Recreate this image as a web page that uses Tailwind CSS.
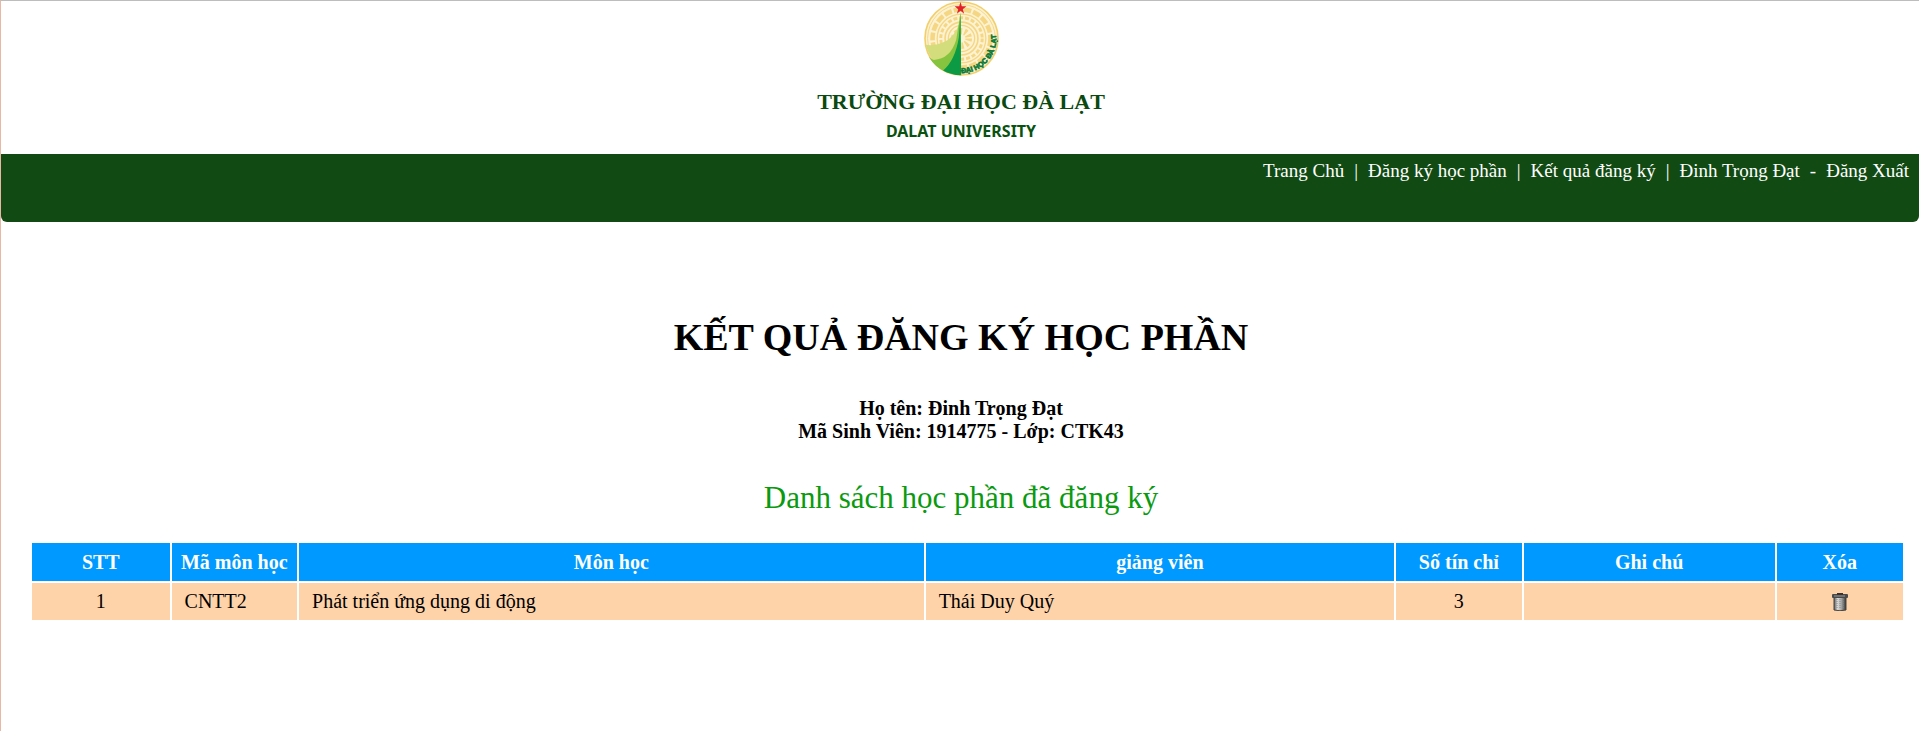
<!DOCTYPE html>
<html lang="vi">
<head>
<meta charset="utf-8">
<title>Kết quả đăng ký học phần</title>
<script src="https://cdn.jsdelivr.net/npm/@tailwindcss/browser@4"></script>
</head>
<body class="min-h-screen border-t border-l border-t-[#bdbdbd] border-l-[#e9b8a4] bg-white font-['Liberation_Serif',serif] text-black">
  <header>
    <div class="flex flex-col items-center pb-[11px] pl-0.5 text-[#0a4a10]">
      <svg class="h-[75px] w-[75px]" viewBox="70 0 228 228" role="img" aria-label="Đại học Đà Lạt">
        <circle cx="184" cy="114" r="111" fill="#fdf3d3" stroke="#f3cf6b" stroke-width="5"/>
        <g fill="none" stroke="#f5d683">
          <circle cx="184" cy="114" r="103" stroke-width="3"/>
          <circle cx="184" cy="114" r="88" stroke-width="14" stroke-dasharray="24 6"/>
          <circle cx="184" cy="114" r="74" stroke-width="4"/>
          <circle cx="184" cy="114" r="63" stroke-width="9" stroke-dasharray="12 6"/>
          <circle cx="184" cy="114" r="50" stroke-width="5"/>
          <circle cx="184" cy="114" r="40" stroke-width="4"/>
          <circle cx="184" cy="114" r="22" stroke-width="20" stroke-dasharray="7 7"/>
        </g>
        <path d="M75 133Q100 137 126 127Q160 115 177 70L181 36V226Q100 218 75 133Z" fill="#d3dd7c"/>
        <path d="M80 160Q86 175 100 179Q150 177 168 118L181 36V226Q106 218 80 160Z" fill="#86c440"/>
        <path d="M128 211Q165 180 176 110L181 36L183 226Q150 224 128 211Z" fill="#0c9a45"/>
        <path d="M181 3L185 16L199 16L188 25L192 39L181 30L170 39L174 25L163 16L177 16Z" fill="#e32227"/>
        <path id="seal" d="M183 219A105 105 0 0 0 288 95" fill="none"/>
        <text class="font-['Liberation_Sans',sans-serif] text-[22px] font-bold" fill="#0b7a38" stroke="#0b7a38" stroke-width="2"><textPath href="#seal">ĐẠI HỌC ĐÀ LẠT</textPath></text>
      </svg>
      <p class="mt-2.5 text-[22px] leading-8 font-bold">TRƯỜNG ĐẠI HỌC ĐÀ LẠT</p>
      <p class="mt-px font-['Noto_Sans',sans-serif] text-base leading-6 font-bold text-[#0a520f]">DALAT UNIVERSITY</p>
    </div>
    <nav class="flex h-[68px] items-start justify-end gap-2.5 rounded-b-[6px] bg-[#114a13] px-2.5 pt-[5px] text-[19px] leading-6 text-white">
      <a href="#">Trang Chủ</a><span>|</span>
      <a href="#">Đăng ký học phần</a><span>|</span>
      <a href="#">Kết quả đăng ký</a><span>|</span>
      <a href="#">Đinh Trọng Đạt</a><span>-</span>
      <a href="#">Đăng Xuất</a>
    </nav>
  </header>
  <main class="pt-[92px] pb-10">
    <div class="pl-0.5 text-center">
      <h1 class="text-[38px] leading-[46px] font-bold">KẾT QUẢ ĐĂNG KÝ HỌC PHẦN</h1>
      <p class="mt-[37px] text-xl leading-[23px] font-bold">Họ tên: Đinh Trọng Đạt<br>Mã Sinh Viên: 1914775 - Lớp: CTK43</p>
      <h2 id="list-title" class="pt-[37px] pb-[25px] text-[31px] leading-9 text-[#0a9a0f]">Danh sách học phần đã đăng ký</h2>
    </div>
    <div class="pr-3.5 pl-[29px]">
    <table aria-labelledby="list-title" class="w-full table-fixed border-separate border-spacing-[2px] text-xl leading-[23px]">
      <colgroup>
        <col class="w-[7.4%]"><col class="w-[6.75%]"><col class="w-[33.6%]"><col class="w-[25.2%]"><col class="w-[6.75%]"><col class="w-[13.5%]"><col class="w-[6.8%]">
      </colgroup>
      <thead>
        <tr class="h-[38px] bg-[#0099ff] text-white">
          <th>STT</th><th>Mã môn học</th><th>Môn học</th><th>giảng viên</th><th>Số tín chỉ</th><th>Ghi chú</th><th>Xóa</th>
        </tr>
      </thead>
      <tbody>
        <tr class="h-[37px] bg-[#ffd3a9]">
          <td class="text-center">1</td>
          <td class="px-[13px]">CNTT2</td>
          <td class="px-[13px]">Phát triển ứng dụng di động</td>
          <td class="px-[13px]">Thái Duy Quý</td>
          <td class="text-center">3</td>
          <td></td>
          <td class="text-center">
            <button type="button" aria-label="Xóa" class="mx-auto block cursor-pointer">
              <svg class="h-[18px] w-4" viewBox="0 0 16 18">
                <defs><linearGradient id="can"><stop offset="0" stop-color="#555"/><stop offset=".3" stop-color="#ddd"/><stop offset=".6" stop-color="#aaa"/><stop offset="1" stop-color="#333"/></linearGradient></defs>
                <path d="M2 4H14V17Q8 18.500 2 17Z" fill="url(#can)" stroke="#444"/>
                <path d="M5 6V16M8 6V16M11 6V16" stroke="#888" stroke-dasharray="1 1"/>
                <rect y="1" width="16" height="4" rx="1" fill="#4a4a4a"/>
                <path d="M2 3H13" stroke="#999"/>
                <rect x="5" width="6" height="2" fill="#3a3030"/>
              </svg>
            </button>
          </td>
        </tr>
      </tbody>
    </table>
    </div>
  </main>
</body>
</html>
